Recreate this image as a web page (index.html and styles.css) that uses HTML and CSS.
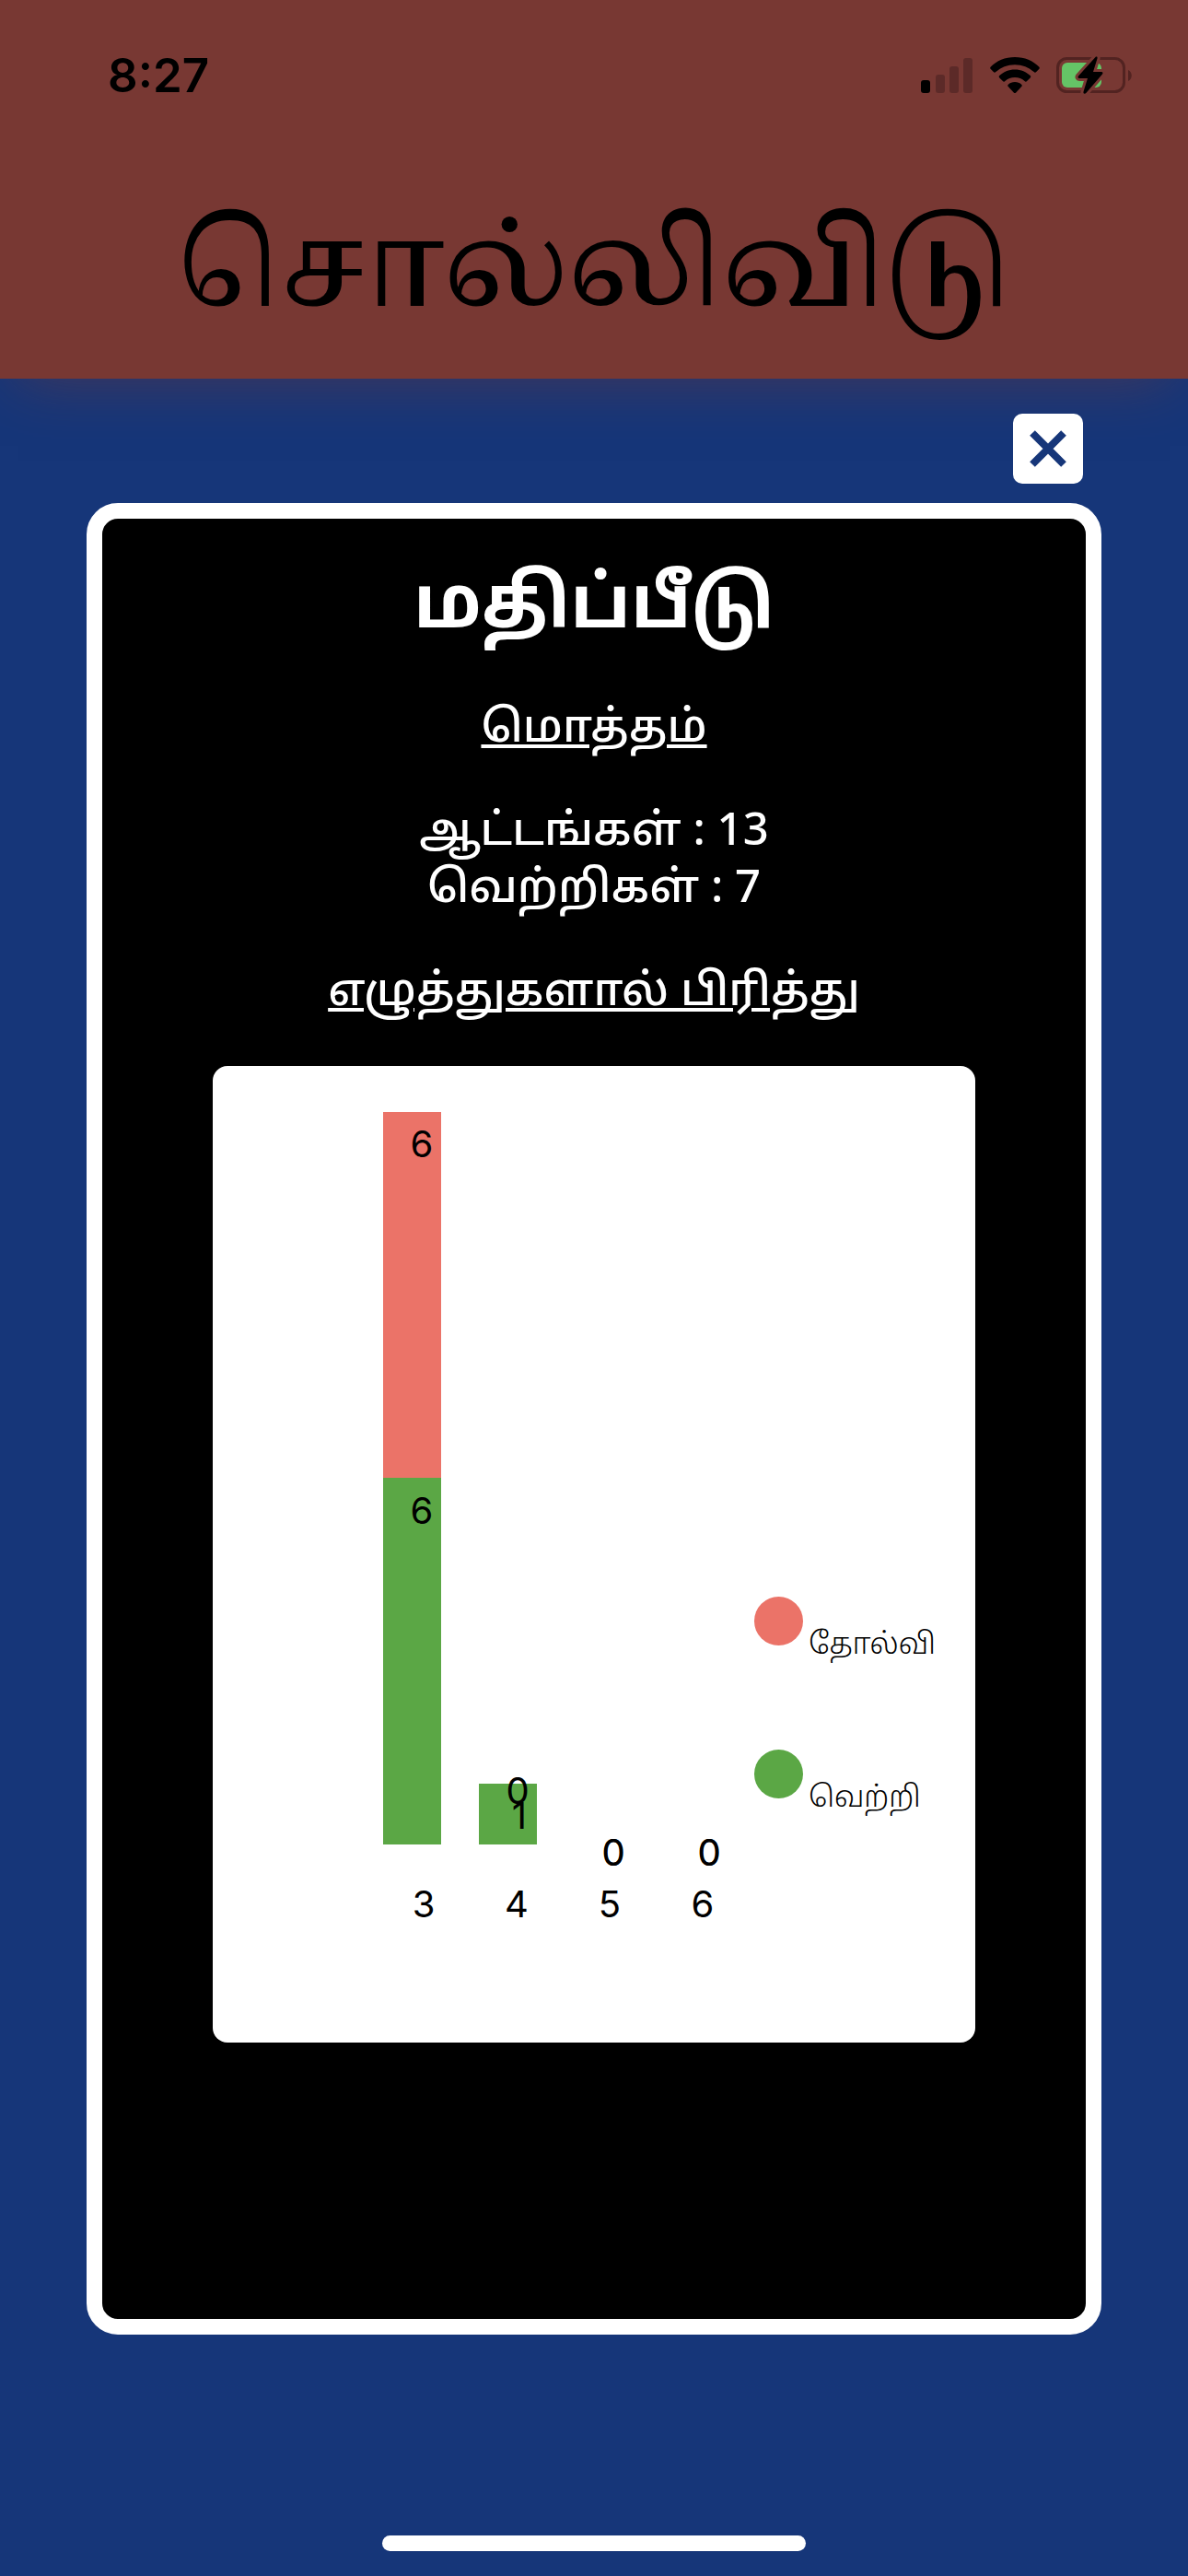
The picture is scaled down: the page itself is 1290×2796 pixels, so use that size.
FILE: index.html
```html
<!DOCTYPE html>
<html lang="ta">
<head>
<meta charset="utf-8">
<meta name="viewport" content="width=device-width, initial-scale=1">
<title>சொல்லிவிடு</title>
<link rel="stylesheet" href="styles.css">
</head>
<body>
<header class="header">
  <div class="status">
    <span class="time">8:27</span>
    <div class="status-icons">
      <svg class="signal" viewBox="0 0 57 40" aria-hidden="true">
        <g fill="#5c2a28"><rect x="16" y="19" width="10" height="20" rx="3"/><rect x="31" y="10" width="10" height="29" rx="3"/><rect x="46" y="1" width="10" height="38" rx="3"/></g>
        <rect x="0" y="25" width="10" height="14" rx="3"/>
      </svg>
      <svg class="wifi" viewBox="0 0 54 40" aria-hidden="true">
        <path d="M27 0C16.500 0 7 4 .8 10.600c-.8.800-.8 1.700 0 2.500l3 3c.8.800 1.700.8 2.500 0C11.800 11.200 19 8.200 27 8.200s15.200 3 20.700 7.900c.8.800 1.700.8 2.500 0l3-3c.8-.8.800-1.700 0-2.500C47 4 37.500 0 27 0z"/>
        <path d="M27 13.500c-6.700 0-12.600 2.600-16.700 6.600-.8.800-.7 1.700 0 2.400l3.600 3.600c.8.800 1.700.7 2.500 0 2.700-2.500 6.400-4 10.600-4s7.900 1.500 10.600 4c.8.700 1.700.8 2.500 0l3.600-3.600c.7-.7.8-1.600 0-2.400-4.100-4-10-6.600-16.700-6.600z"/>
        <path d="M27 27c-2.900 0-5.400 1-7.200 2.700-.8.800-.7 1.500 0 2.300l6 6.500c.8.800 1.600.8 2.400 0l6-6.500c.7-.8.800-1.500 0-2.300C32.400 28 29.900 27 27 27z"/>
      </svg>
      <svg class="battery" viewBox="0 0 83 42" aria-hidden="true">
        <rect x="1.500" y="2.500" width="72" height="36" rx="10" fill="none" stroke="#522321" stroke-width="3"/>
        <path d="M78 15v12c5-2 5-10 0-12z" fill="#522321"/>
        <rect x="6" y="7" width="43" height="27" rx="6" fill="#65c466"/>
        <path d="M42.500 1 24 21.500c-1 1.200-.4 2.500 1 2.500h9l-4.500 14.500c-.5 2.200 1.400 3 2.800 1.500L50 19.500c1-1.200.4-2.500-1-2.500h-9l4.500-14.500C45 .5 43.500 0 42.500 1z" stroke="#783833" stroke-width="6" paint-order="stroke"/>
      </svg>
    </div>
  </div>
  <h1 class="brand">சொல்லிவிடு</h1>
</header>
<main class="sheet">
  <button class="close" type="button" aria-label="Close">
    <svg viewBox="0 0 42 42" aria-hidden="true"><path d="M4 4 38 38M38 4 4 38" stroke="#163679" stroke-width="8"/></svg>
  </button>
  <section class="card">
    <h2 class="title">மதிப்பீடு</h2>
    <h3 class="subtitle">மொத்தம்</h3>
    <p class="stats">ஆட்டங்கள் : 13<br>வெற்றிகள் : 7</p>
    <h3 class="subtitle">எழுத்துகளால் பிரித்து</h3>
    <div class="chart">
      <svg class="plot" viewBox="0 0 576 1060" role="img" aria-label="3, 4, 5, 6">
        <g fill="#eb7368"><rect x="185" y="50" width="63" height="397"/></g>
        <g fill="#5ba745"><rect x="185" y="447" width="63" height="398"/><rect x="289" y="779" width="63" height="66"/></g>
        <g class="labels">
          <text x="227" y="99">6</text>
          <text x="227" y="497">6</text>
          <text x="331" y="801">0</text>
          <text x="333" y="828">1</text>
          <text x="435" y="868">0</text>
          <text x="539" y="868">0</text>
          <text x="435" y="868">0</text>
          <text x="539" y="868">0</text>
          <text x="229" y="924">3</text>
          <text x="330" y="924">4</text>
          <text x="431" y="924">5</text>
          <text x="532" y="924">6</text>
        </g>
      </svg>
      <ul class="legend">
        <li class="key"><span class="dot dot-loss"></span><span class="key-name">தோல்வி</span></li>
        <li class="key"><span class="dot dot-win"></span><span class="key-name">வெற்றி</span></li>
      </ul>
    </div>
  </section>
  <div class="home-bar"></div>
</main>
</body>
</html>
```

FILE: styles.css
```css
* {
  box-sizing: border-box;
}

body {
  margin: 0;
  min-height: 100vh;
  display: flex;
  flex-direction: column;
  background: #163679;
  font-family: "Noto Sans", "Noto Sans Tamil", sans-serif;
}

h1,
h2,
h3,
p,
ul {
  margin: 0;
  padding: 0;
  font-weight: 400;
}

.header {
  min-height: 411px;
  background: #783833;
  color: #000;
  box-shadow: 0 20px 60px -20px rgba(120, 56, 51, 0.5);
}

.status {
  display: flex;
  justify-content: space-between;
  align-items: center;
  padding: 52px 60px 0 117px;
}

.time {
  font: 600 51px/60px Inter, sans-serif;
}

.status-icons {
  display: flex;
  align-items: center;
  gap: 18px;
}

.signal {
  width: 57px;
  height: 40px;
}

.wifi {
  width: 54px;
  height: 40px;
}

.battery {
  width: 83px;
  height: 42px;
}

.brand {
  padding-top: 84px;
  font: 500 126px/200px "Noto Serif Tamil", "Noto Serif", serif;
  text-align: center;
}

.sheet {
  flex: 1;
  display: flex;
  flex-direction: column;
  padding: 38px 94px 27px;
}

.close {
  align-self: flex-end;
  display: grid;
  place-items: center;
  width: 76px;
  height: 76px;
  margin: 0 20px 21px;
  padding: 0;
  border: 0;
  border-radius: 10px;
  background: #fff;
}

.close svg {
  width: 42px;
  height: 42px;
}

.card {
  display: flex;
  flex-direction: column;
  align-items: center;
  padding: 34px 20px 300px;
  border: 17px solid #fff;
  border-radius: 34px;
  background: #000;
  color: #fff;
  text-align: center;
}

.title {
  font-size: 79px;
  line-height: 108px;
  font-weight: 700;
}

.subtitle,
.stats {
  font-size: 49px;
  font-weight: 500;
  line-height: 62px;
}

.subtitle {
  margin-top: 50px;
  text-decoration: underline;
}

.stats {
  margin-top: 50px;
}

.chart {
  display: grid;
  grid-template-columns: 576fr 252fr;
  width: 100%;
  max-width: 828px;
  margin-top: 54px;
  border-radius: 16px;
  background: #fff;
  color: #000;
}

.plot {
  display: block;
  width: 100%;
}

.labels {
  font: 400 40px Inter, sans-serif;
  text-anchor: middle;
}

.legend {
  display: flex;
  flex-direction: column;
  gap: 80px;
  padding: 576px 0 0 12px;
  list-style: none;
}

.key {
  display: flex;
  gap: 6px;
  height: 86px;
}

.dot {
  width: 53px;
  height: 53px;
  border-radius: 50%;
}

.dot-loss {
  background: #eb7368;
}

.dot-win {
  background: #5ba745;
}

.key-name {
  padding-top: 20px;
  font-size: 32px;
  font-weight: 300;
  line-height: 60px;
}

.home-bar {
  width: 460px;
  max-width: 60%;
  height: 17px;
  margin: auto auto 0;
  border-radius: 9px;
  background: #fff;
}
```
